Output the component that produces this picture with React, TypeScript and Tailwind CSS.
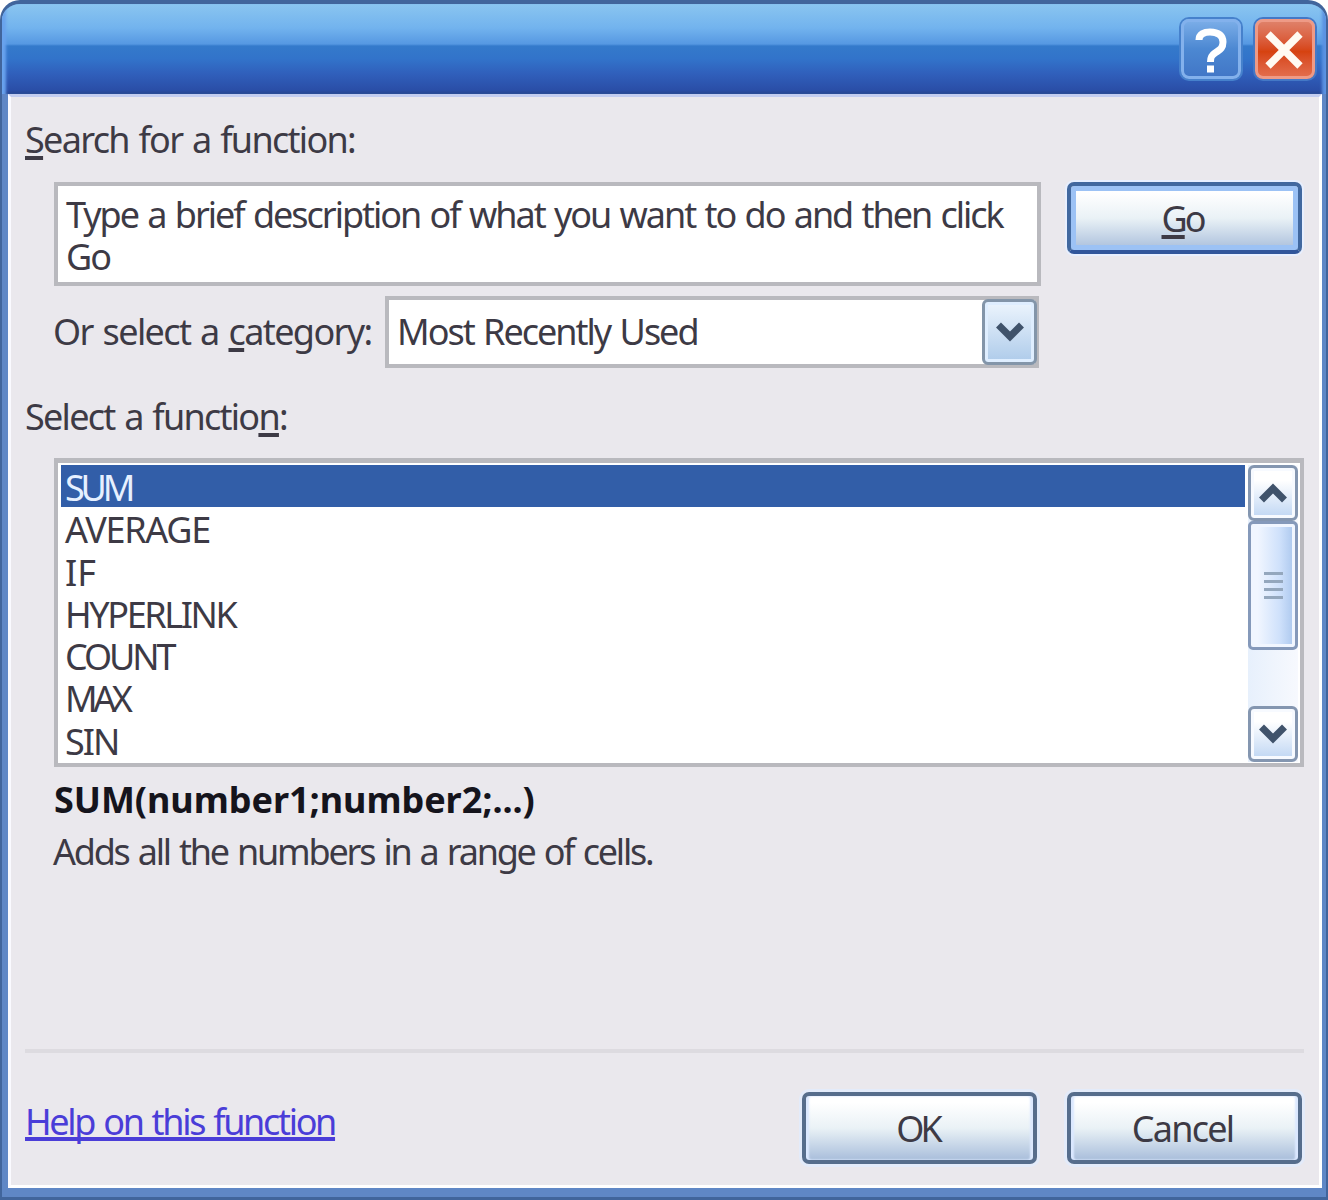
import type { ReactNode } from 'react';
import clsx from 'clsx';

const functions = [
  { name: 'SUM', tracking: 'tracking-[-4.2px]' },
  { name: 'AVERAGE', tracking: 'tracking-[-1.3px]' },
  { name: 'IF', tracking: 'tracking-[0px]' },
  { name: 'HYPERLINK', tracking: 'tracking-[-2.4px]' },
  { name: 'COUNT', tracking: 'tracking-[-3.1px]' },
  { name: 'MAX', tracking: 'tracking-[-4.4px]' },
  { name: 'SIN', tracking: 'tracking-[-2px]' },
];

function Key({ children }: { children: ReactNode }) {
  return <span className="underline decoration-[4px] underline-offset-[3px] [text-decoration-skip-ink:none]">{children}</span>;
}

function Chevron({ up = false }: { up?: boolean }) {
  return (
    <svg aria-hidden="true" viewBox="0 0 28 20" className={clsx('h-5 w-7', up && 'rotate-180')} fill="none" stroke="#40536b" strokeWidth="7">
      <path d="M2.500 3 L14 14.500 L25.500 3" />
    </svg>
  );
}

function PushButton({ children, focused = false }: { children: ReactNode; focused?: boolean }) {
  return (
    <button
      className={clsx(
        'flex h-[72px] w-[235px] shrink-0 items-center justify-center rounded-[7px] border-[4px] bg-linear-to-b from-white from-10% via-[#eaf2f6] via-50% to-[#a9bedb] pt-[1px] pr-[4px]',
        focused
          ? 'border-[#41689f] border-b-[#31569b] shadow-[inset_0_0_0_5px_#9cc2f5,0_0_0_2px_#e7efff]'
          : 'border-[#566d8c] shadow-[inset_3px_0_2px_#dbe8ff,inset_-3px_0_2px_#dbe8ff,0_0_0_3px_#e3ebfa]',
      )}
    >
      {children}
    </button>
  );
}

function ScrollArrow({ up = false }: { up?: boolean }) {
  return (
    <button className="flex h-[56px] w-[50px] shrink-0 items-center justify-center rounded-[6px] border-[3px] border-[#8496b0] bg-linear-to-b from-white from-25% to-[#bfd6f3] shadow-[inset_0_0_0_3px_#f7faff]">
      <Chevron up={up} />
    </button>
  );
}

export default function App() {
  return (
    <div className="h-[1200px] w-[1328px] overflow-hidden bg-white font-['Noto_Sans','DejaVu_Sans',sans-serif] text-[36px] leading-[42px] whitespace-nowrap text-[#3d3a45] [word-spacing:2px]">
      <div className="flex h-full flex-col overflow-hidden rounded-t-[20px] border-x-[2px] border-t-[4px] border-b-[3px] border-[#41659c] bg-[#5f87c6]">
        {/* Title bar */}
        <div className="flex h-[90px] shrink-0 items-start justify-end gap-[14px] bg-[linear-gradient(#8ac5f0_0,#72b3ee_24px,#5698e2_40px,#347acb_42px,#3273ca_55px,#305fbb_70px,#2a4ea7_86px,#27468f_90px)] pt-[15px] pr-[11px] shadow-[inset_6px_0_3px_-2px_#69a3ee,inset_-6px_0_3px_-2px_#5b93e2]">
          <button aria-label="Help" className="flex size-[60px] items-center justify-center rounded-[8px] border-[3px] border-[#83b1ec] bg-linear-to-b from-[#79ace7] via-[#4c88d2] to-[#4277c7] shadow-[0_0_0_2px_#4681cc]">
            <svg aria-hidden="true" viewBox="0 0 54 54" className="size-[54px] shrink-0" fill="none" stroke="#fff" strokeWidth="7">
              <path d="M15 18 C15 12 20 10 26 10 C35 10 39 14 39 20 C39 27 35 28 31 31 C27 33.500 26.500 36 26.500 40" />
              <path d="M23 47 h7" />
            </svg>
          </button>
          <button aria-label="Close" className="flex size-[60px] items-center justify-center rounded-[8px] border-[3px] border-[#ee9a86] bg-linear-to-b from-[#df8068] via-[#d6420f] via-55% to-[#e26c4b] shadow-[0_0_0_2px_#4478c6]">
            <svg aria-hidden="true" viewBox="0 0 54 54" className="size-[54px] shrink-0" fill="none" stroke="#fffaf2" strokeWidth="7.5">
              <path d="M10 12 L42 44 M42 12 L10 44" />
            </svg>
          </button>
        </div>

        {/* Dialog body */}
        <div className="mr-[4px] mb-[9px] ml-[6px] flex min-h-0 flex-1 flex-col border-[3px] border-t-[#c3cdf0] border-r-white border-b-white border-l-[#fafaff] bg-[#eae8ed] pr-[15px] pl-[14px]">
          <div className="mt-[22px] h-[42px] tracking-[-1.7px]">
            <Key>S</Key>earch for a function:
          </div>

          <div className="mt-[21px] mr-[2px] ml-[29px] flex justify-between">
            <div className="h-[104px] w-[987px] border-[4px] border-[#b9b9be] bg-white pt-[8px] pl-[8px] tracking-[-2.03px]">
              Type a brief description of what you want to do and then click
              <br />
              Go
            </div>
            <PushButton focused>
              <span className="tracking-[-3px]"><Key>G</Key>o</span>
            </PushButton>
          </div>

          <div className="mt-[10px] ml-[28px] flex h-[72px] items-start">
            <div className="w-[332px] pt-[15px] tracking-[-1.6px]">
              Or select a <Key>c</Key>ategory:
            </div>
            <div className="flex h-[72px] w-[654px] justify-between border-[4px] border-[#b9b9be] bg-white">
              <span className="pt-[11px] pl-[8px] tracking-[-2px]">Most Recently Used</span>
              <button className="-mt-[1px] -mr-[2px] flex h-[66px] w-[55px] items-center justify-center rounded-[6px] border-[3px] border-[#8395a9] bg-linear-to-b from-[#edf5fd] to-[#aecbea] shadow-[inset_0_0_0_3px_#dfeeff]">
                <Chevron />
              </button>
            </div>
          </div>

          <div className="mt-[28px] h-[42px] tracking-[-1.73px]">
            Select a functio<Key>n</Key>:
          </div>

          {/* Function list */}
          <div className="mt-[20px] ml-[29px] flex h-[309px] shrink-0 border-[4px] border-t-[5px] border-[#b9b9be] bg-white pt-[2px] pr-[2px] pl-[3px]">
            <ul className="flex-1">
              {functions.map((fn, i) => (
                <li key={fn.name} className={clsx('h-[42.25px] pt-[2px] pl-[4px]', fn.tracking, i === 0 && 'bg-[#325ea8] text-[#e6f0ff]')}>
                  {fn.name}
                </li>
              ))}
            </ul>
            <div className="ml-[3px] flex h-[297px] w-[50px] flex-col bg-linear-to-r from-[#e7f0fc] to-[#f7f9fe]">
              <ScrollArrow up />
              <div className="flex h-[129px] flex-col items-center justify-center gap-[5px] rounded-[5px] border-[3px] border-[#8599ba] bg-linear-to-r from-[#f1f6ff] from-15% via-[#cfe1fb] via-65% to-[#a9c6ed] shadow-[inset_0_0_0_3px_#f1f6ff]">
                <span className="h-[3px] w-[19px] bg-[#94a7bd]" />
                <span className="h-[3px] w-[19px] bg-[#94a7bd]" />
                <span className="h-[3px] w-[19px] bg-[#94a7bd]" />
                <span className="h-[3px] w-[19px] bg-[#94a7bd]" />
              </div>
              <div className="flex-1" />
              <ScrollArrow />
            </div>
          </div>

          {/* Selected function help */}
          <div className="mt-[12px] ml-[29px] h-[42px] font-bold tracking-[-0.05px] text-[#15141c]">SUM(number1;number2;...)</div>
          <div className="mt-[10px] ml-[28px] h-[42px] tracking-[-2.22px]">Adds all the numbers in a range of cells.</div>

          <div className="mt-auto h-[4px] shrink-0 bg-[#dddbe0]" />
          <div className="mt-[39px] mr-[2px] mb-[21px] flex shrink-0 items-start">
            <a href="#" className="mt-[9px] tracking-[-2.32px] text-[#4a3dd8] underline decoration-[4px] underline-offset-[2px] [text-decoration-skip-ink:none]">
              Help on this function
            </a>
            <div className="ml-auto flex gap-[30px]">
              <PushButton>
                <span className="tracking-[-4px]">OK</span>
              </PushButton>
              <PushButton>
                <span className="tracking-[-1.8px]">Cancel</span>
              </PushButton>
            </div>
          </div>
        </div>
      </div>
    </div>
  );
}
